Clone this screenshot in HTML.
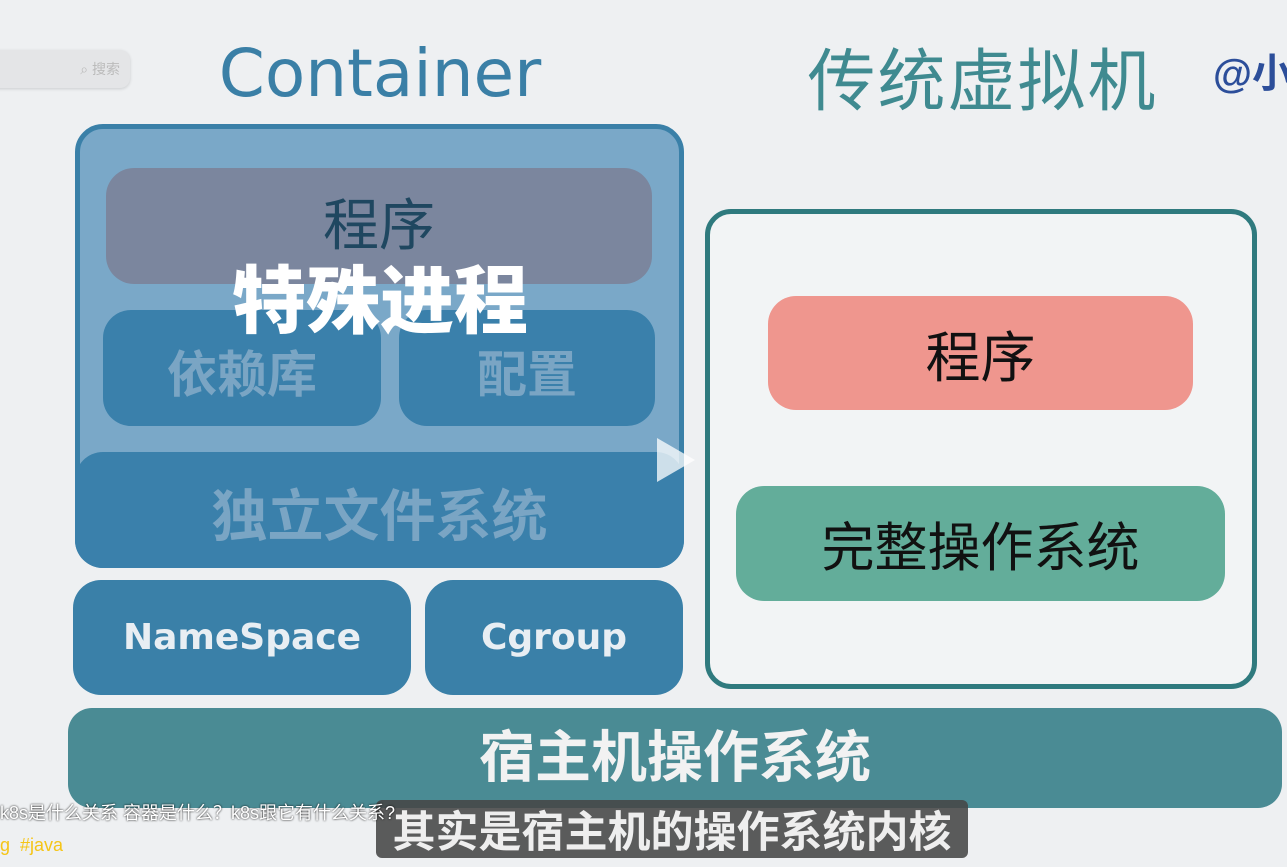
<!DOCTYPE html>
<html><head><meta charset="utf-8"><style>
body{margin:0;width:1287px;height:867px;background:#eef0f2;position:relative;overflow:hidden;font-family:"Liberation Sans","Noto Sans CJK SC",sans-serif}
.a{position:absolute;box-sizing:border-box;display:flex;align-items:center;justify-content:center;white-space:nowrap}
</style></head><body>
<div class="a" style="left:-20px;top:50px;width:150px;height:38px;background:#e4e5e7;border-radius:10px;box-shadow:0 1px 3px rgba(0,0,0,.15);justify-content:flex-end;padding-right:10px;color:#bbb;font-size:14px">⌕ 搜索</div>
<div class="a" style="left:210px;top:28px;width:340px;height:90px;color:#3a7fa6;font-family:'DejaVu Sans',sans-serif;font-size:66px">Container</div>
<div class="a" style="left:805px;top:30px;width:355px;height:90px;color:#3f8a90;font-size:68px;letter-spacing:2px">传统虚拟机</div>
<div class="a" style="left:1213px;top:40px;width:80px;height:60px;color:#2c4e9a;font-size:40px;font-weight:bold;justify-content:flex-start">@小</div>

<div class="a" style="left:75px;top:124px;width:609px;height:444px;background:#7aa8c8;border:5px solid #3a80a8;border-radius:28px"></div>
<div class="a" style="left:106px;top:168px;width:546px;height:116px;background:#7b869e;border-radius:28px;color:#1f4760;font-size:56px;padding-bottom:10px">程序</div>
<div class="a" style="left:103px;top:310px;width:278px;height:116px;background:#3a80ab;border-radius:28px;color:#7aa5c4;font-size:50px;font-weight:bold;padding-top:5px">依赖库</div>
<div class="a" style="left:399px;top:310px;width:256px;height:116px;background:#3a80ab;border-radius:28px;color:#7aa5c4;font-size:50px;font-weight:bold;padding-top:5px">配置</div>
<div class="a" style="left:75px;top:452px;width:609px;height:116px;background:#3a80ab;border-radius:28px;color:#7aa5c4;font-size:56px;font-weight:bold;padding-top:5px">独立文件系统</div>
<div class="a" style="left:190px;top:255px;width:380px;height:80px;color:#fff;font-size:74px;font-weight:900">特殊进程</div>
<div class="a" style="left:73px;top:580px;width:338px;height:115px;background:#3a80a8;border-radius:28px;color:#e8eef3;font-family:'DejaVu Sans',sans-serif;font-size:36px;font-weight:bold">NameSpace</div>
<div class="a" style="left:425px;top:580px;width:258px;height:115px;background:#3a80a8;border-radius:28px;color:#e8eef3;font-family:'DejaVu Sans',sans-serif;font-size:36px;font-weight:bold">Cgroup</div>
<svg style="position:absolute;left:655px;top:436px" width="42" height="48"><path d="M2 2 L40 24 L2 46Z" fill="rgba(255,255,255,.75)"/></svg>

<div class="a" style="left:705px;top:209px;width:552px;height:480px;background:#f2f4f5;border:5px solid #2f7a7e;border-radius:26px"></div>
<div class="a" style="left:768px;top:296px;width:425px;height:114px;background:#ef968e;border-radius:28px;color:#111;font-size:55px">程序</div>
<div class="a" style="left:736px;top:486px;width:489px;height:115px;background:#63ad9a;border-radius:28px;color:#111;font-size:53px">完整操作系统</div>

<div class="a" style="left:68px;top:708px;width:1214px;height:100px;background:#4a8b94;border-radius:24px;color:#f2f2f2;font-size:56px;font-weight:bold;padding-bottom:10px">宿主机操作系统</div>
<div class="a" style="left:376px;top:800px;width:592px;height:58px;background:rgba(70,70,70,.88);border-radius:6px;color:#eee;font-size:43px;font-weight:bold">其实是宿主机的操作系统内核</div>
<div class="a" style="left:0;top:799px;height:26px;color:#fff;font-size:18px;justify-content:flex-start;text-shadow:0 0 2px #000">k8s是什么关系 容器是什么？k8s跟它有什么关系?</div>
<div class="a" style="left:0;top:832px;height:26px;color:#f5c518;font-size:18px;justify-content:flex-start">g &nbsp;#java</div>
</body></html>
